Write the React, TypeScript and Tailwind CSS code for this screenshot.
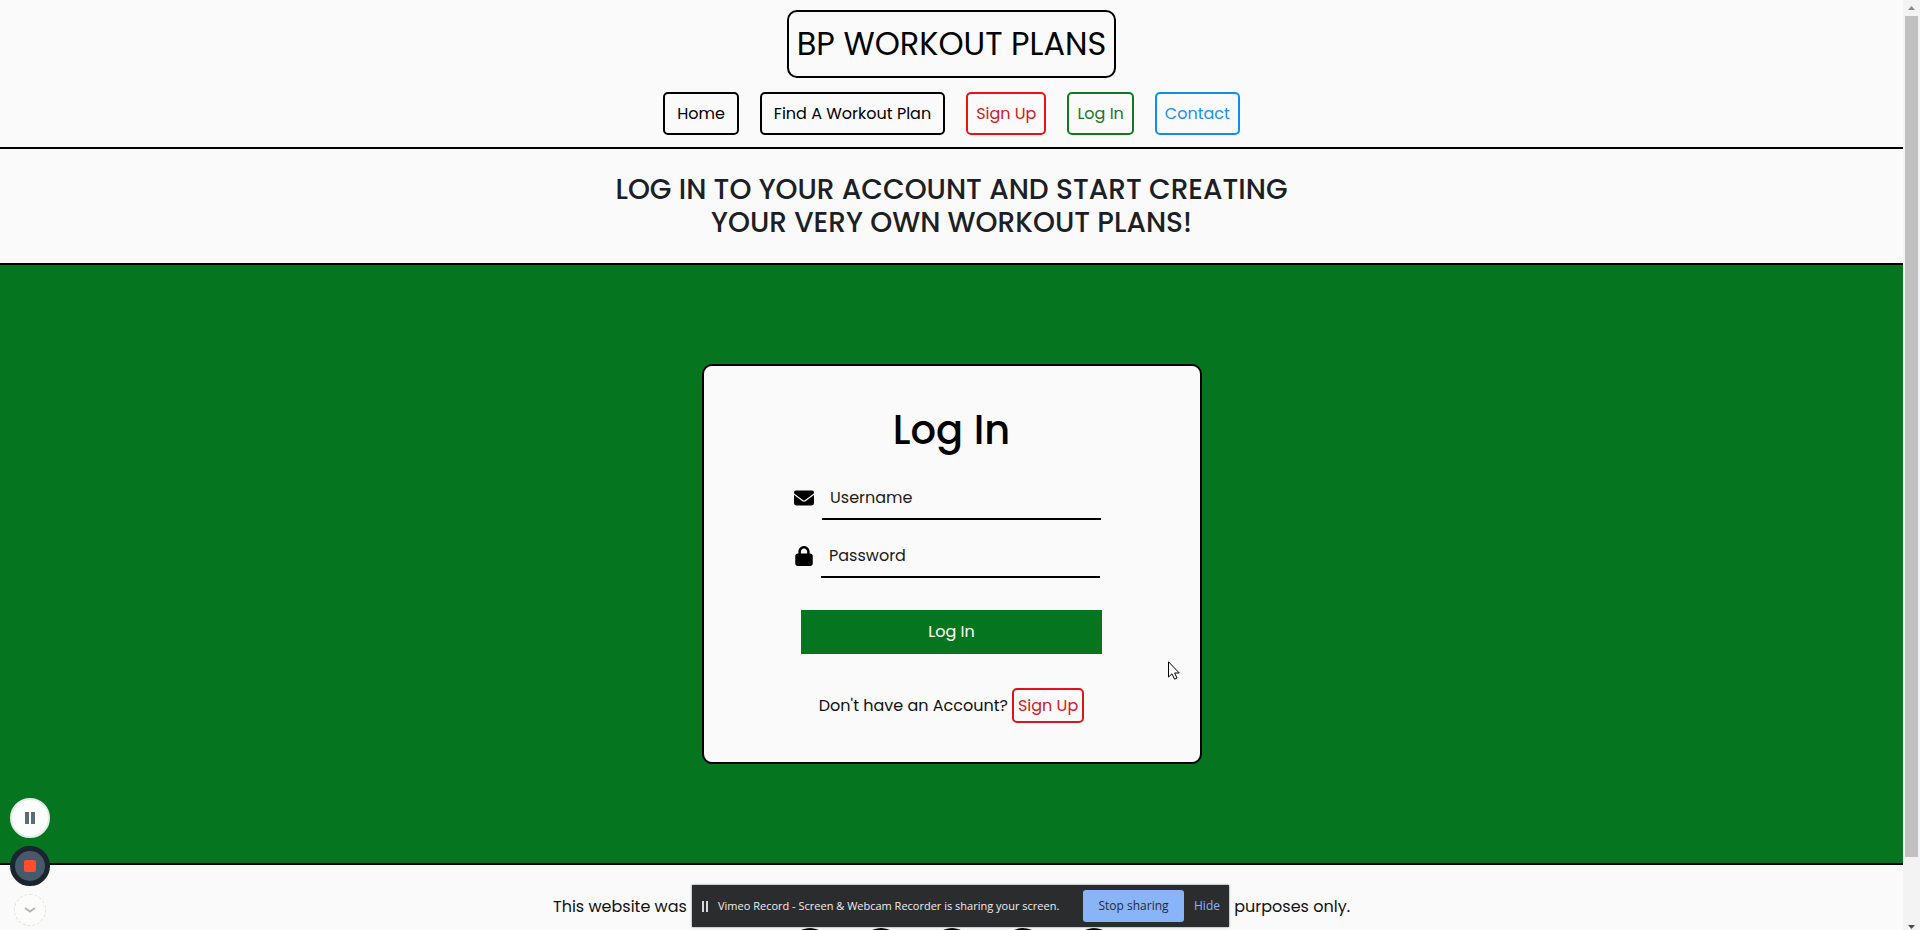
import { FaEnvelope, FaLock } from "react-icons/fa6";

const navLinks = [
  { label: "Home", style: "border-black text-black px-3" },
  { label: "Find A Workout Plan", style: "border-black text-black px-3" },
  { label: "Sign Up", style: "border-[#ee1111] text-[#cc2020] px-2" },
  { label: "Log In", style: "border-[#0f7a1e] text-[#1f7326] px-2" },
  { label: "Contact", style: "border-[#0d8fee] text-[#1e90e8] px-2" },
];

const socials = ["Facebook", "Twitter", "Instagram", "YouTube", "LinkedIn"];

function Header() {
  return (
    <header className="flex flex-col items-center border-b-2 border-black pt-[10px] pb-3">
      <a href="#home" className="flex h-[68px] items-center rounded-[10px] border-2 border-black px-2 text-[32px] text-black">
        BP WORKOUT PLANS
      </a>
      <nav className="mt-[14px] flex gap-[21px]">
        {navLinks.map((link) => (
          <a
            key={link.label}
            href="#nav"
            className={`flex h-[43px] items-center rounded-[5px] border-2 text-[16px] ${link.style}`}
          >
            {link.label}
          </a>
        ))}
      </nav>
    </header>
  );
}

function LoginCard() {
  return (
    <form className="flex h-[400px] w-[500px] flex-col items-center rounded-[10px] border-2 border-black bg-[#fafafa] pt-[34px] text-[16px]">
      <h2 className="text-[40px] leading-[60px] font-medium text-black">Log In</h2>
      <div className="mt-4 mr-2 flex flex-col items-center gap-[14px]">
        <div className="flex items-center gap-2">
          <FaEnvelope className="size-5 text-black" />
          <input
            type="text"
            aria-label="Username"
            placeholder="Username"
            className="h-11 w-[279px] border-b-2 border-black px-2 text-black outline-none placeholder:text-[#1a1a1a]"
          />
        </div>
        <div className="flex items-center gap-2">
          <FaLock className="h-5 w-[18px] text-black" />
          <input
            type="password"
            aria-label="Password"
            placeholder="Password"
            className="h-11 w-[279px] border-b-2 border-black px-2 text-black outline-none placeholder:text-[#1a1a1a]"
          />
        </div>
      </div>
      <button type="button" className="mt-8 h-11 w-[301px] bg-[#067520] text-white">
        Log In
      </button>
      <p className="mt-[34px] flex items-center gap-1 text-[#111]">
        Don't have an Account?
        <a href="#signup" className="flex h-[35px] items-center rounded-[5px] border-2 border-[#dd1515] px-1 text-[#cc2020]">
          Sign Up
        </a>
      </p>
    </form>
  );
}

function Footer() {
  return (
    <footer className="flex flex-col items-center border-t-2 border-black pt-[30px]">
      <p className="flex w-[797px] justify-between text-[16px] leading-6 text-[#111]">
        <span>This website was</span>
        <span>purposes only.</span>
      </p>
      <div className="mt-[9px] flex gap-[31px]">
        {socials.map((name) => (
          <a key={name} href="#social" aria-label={name} className="size-10 rounded-full bg-black" />
        ))}
      </div>
    </footer>
  );
}

function ScrollBar() {
  return (
    <div className="flex w-[17px] shrink-0 flex-col items-center bg-[#f3f3f3]" aria-hidden="true">
      <svg viewBox="0 0 17 16" className="h-4 w-[17px] shrink-0">
        <path d="M5 10 L8.5 6 L12 10 Z" fill="#8a8a8a" />
      </svg>
      <div className="w-[13px] flex-1 bg-[#c1c1c1]" />
      <div className="flex h-[73px] shrink-0 items-end">
        <svg viewBox="0 0 17 16" className="h-4 w-[17px]">
          <path d="M5 11 L12 11 L8.5 15 Z" fill="#4a4a4a" />
        </svg>
      </div>
    </div>
  );
}

function RecorderControls() {
  return (
    <div className="absolute bottom-1 left-[10px] flex flex-col items-center gap-2">
      <button type="button" aria-label="Pause" className="flex size-10 items-center justify-center rounded-full border-2 border-[#e4ebe6] bg-[#fbfdfc]">
        <svg viewBox="0 0 10 12" className="h-3 w-[10px]" fill="#5f6b70">
          <rect width="4" height="12" />
          <rect x="6" width="4" height="12" />
        </svg>
      </button>
      <button type="button" aria-label="Stop" className="flex size-10 items-center justify-center rounded-full border-5 border-[#1a2530] bg-[#475a6c]">
        <span className="size-3 rounded-[2px] bg-[#ff4d2e]" />
      </button>
      <button type="button" aria-label="Collapse" className="flex size-8 items-center justify-center rounded-full border border-dashed border-[#e2e4da] bg-[#fcfdfb]">
        <svg viewBox="0 0 12 6" className="h-[6px] w-3" fill="none" stroke="#b4b8ae" strokeWidth="2">
          <path d="M1 1 L6 4.5 L11 1" />
        </svg>
      </button>
    </div>
  );
}

function SharingBar() {
  return (
    <div
      className="absolute bottom-[3px] left-[692px] flex h-[42px] w-[537px] items-center bg-[#2b2c2e] pl-[10px] text-[12px] text-[#eeeeee] shadow-[0_0_2px_#777]"
      style={{ fontFamily: '"Segoe UI", "Open Sans", sans-serif' }}
    >
      <svg viewBox="0 0 6 11" className="h-[11px] w-[6px]" fill="#d8d8d8">
        <rect width="2" height="11" />
        <rect x="4" width="2" height="11" />
      </svg>
      <span className="ml-[10px] w-[365px] text-[11px] whitespace-nowrap">
        Vimeo Record - Screen &amp; Webcam Recorder is sharing your screen.
      </span>
      <button type="button" className="h-8 w-[101px] rounded-[3px] bg-[#8ab4f8] text-[#1f2a3c]">
        Stop sharing
      </button>
      <button type="button" className="ml-[10px] text-[#8ab4f8]">
        Hide
      </button>
    </div>
  );
}

function Cursor() {
  return (
    <svg viewBox="0 0 12 19" className="absolute top-[661px] left-[1168px] h-[19px] w-3" aria-hidden="true">
      <path
        d="M0.5 0.8 V16 L4 12.8 L6.5 18.2 L9 17 L6.6 12 H11.3 Z"
        fill="#fff"
        stroke="#000"
      />
    </svg>
  );
}

export default function App() {
  return (
    <div
      className="relative flex h-screen overflow-hidden bg-[#fafafa]"
      style={{ fontFamily: 'Poppins, Inter, "Liberation Sans", sans-serif' }}
    >
      <div className="min-w-0 flex-1 overflow-hidden">
        <Header />
        <section className="flex justify-center border-b-2 border-black px-4 py-6">
          <h1 className="max-w-[720px] text-center text-[28px] leading-[33px] font-medium text-[#1c2024]">
            LOG IN TO YOUR ACCOUNT AND START CREATING YOUR VERY OWN WORKOUT PLANS!
          </h1>
        </section>
        <main className="flex h-[598px] items-center justify-center bg-[#067520]">
          <LoginCard />
        </main>
        <Footer />
      </div>
      <ScrollBar />
      <RecorderControls />
      <SharingBar />
      <Cursor />
    </div>
  );
}
